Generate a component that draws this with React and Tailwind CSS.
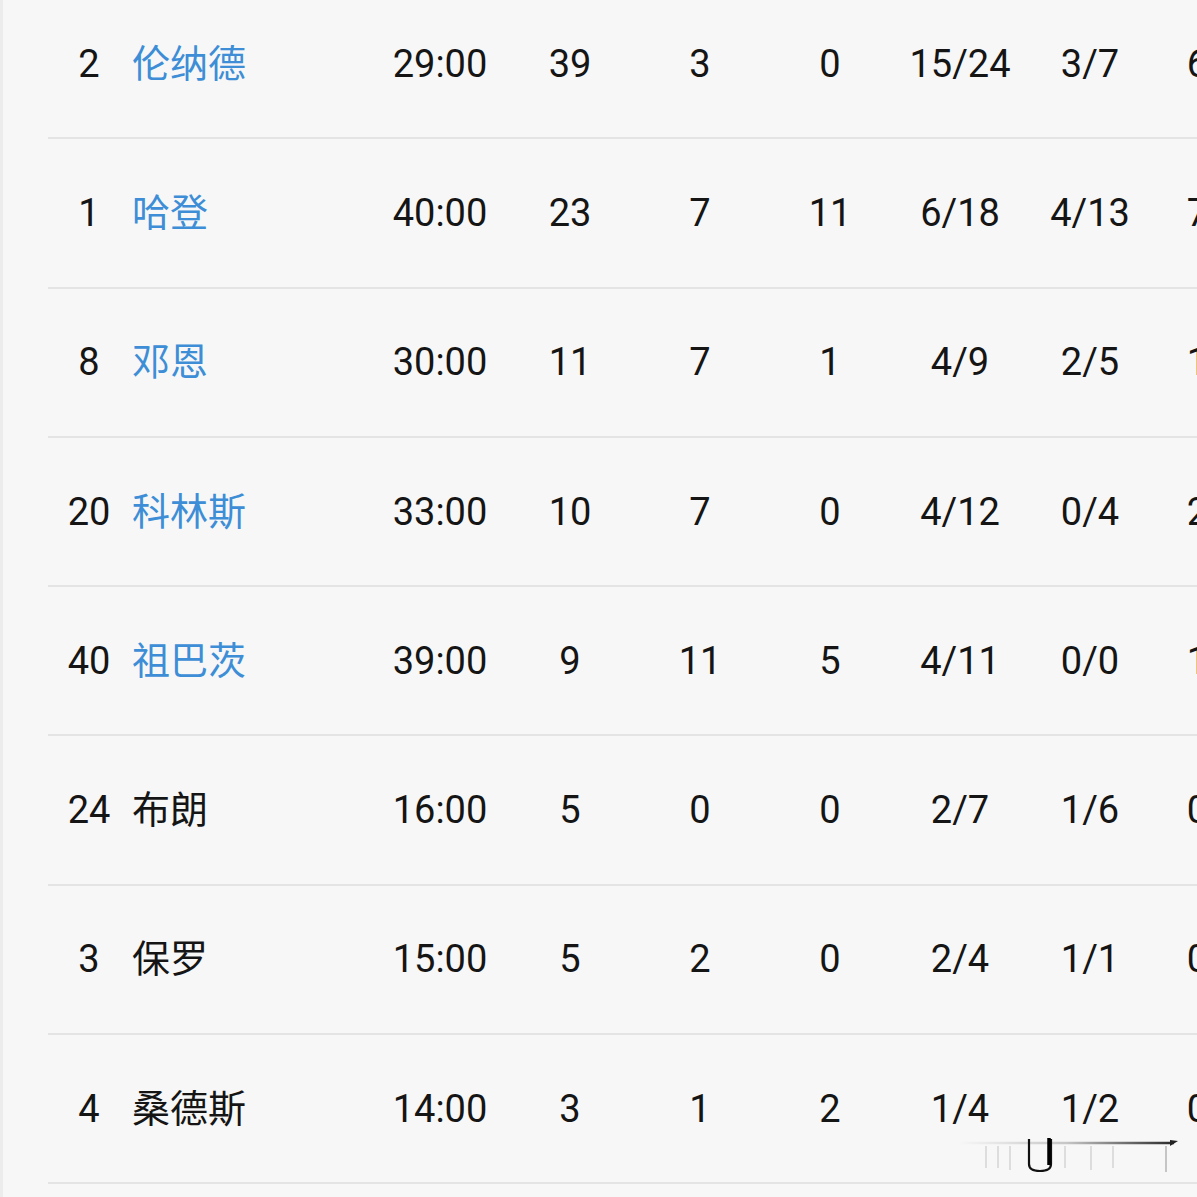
const players = [
  { no: "2", name: "伦纳德", star: true, min: "29:00", pts: "39", reb: "3", ast: "0", fg: "15/24", tp: "3/7", ft: "6/8" },
  { no: "1", name: "哈登", star: true, min: "40:00", pts: "23", reb: "7", ast: "11", fg: "6/18", tp: "4/13", ft: "7/7" },
  { no: "8", name: "邓恩", star: true, min: "30:00", pts: "11", reb: "7", ast: "1", fg: "4/9", tp: "2/5", ft: "1/2" },
  { no: "20", name: "科林斯", star: true, min: "33:00", pts: "10", reb: "7", ast: "0", fg: "4/12", tp: "0/4", ft: "2/2" },
  { no: "40", name: "祖巴茨", star: true, min: "39:00", pts: "9", reb: "11", ast: "5", fg: "4/11", tp: "0/0", ft: "1/2" },
  { no: "24", name: "布朗", star: false, min: "16:00", pts: "5", reb: "0", ast: "0", fg: "2/7", tp: "1/6", ft: "0/0" },
  { no: "3", name: "保罗", star: false, min: "15:00", pts: "5", reb: "2", ast: "0", fg: "2/4", tp: "1/1", ft: "0/0" },
  { no: "4", name: "桑德斯", star: false, min: "14:00", pts: "3", reb: "1", ast: "2", fg: "1/4", tp: "1/2", ft: "0/0" },
];

function Row({ p, first }) {
  return (
    <div
      className={
        "ml-12 flex h-[149.3px] shrink-0 items-center border-b-2 border-[#e4e4e4] " +
        (first ? "-mt-[10px]" : "")
      }
    >
      <div className="w-[82px] shrink-0 text-center">{p.no}</div>
      <div className={"w-[245px] shrink-0 pl-[2px] " + (p.star ? "text-[#3d8ed6]" : "")}>
        {p.name}
      </div>
      <div className="w-[130px] shrink-0 text-center">{p.min}</div>
      <div className="w-[130px] shrink-0 text-center">{p.pts}</div>
      <div className="w-[130px] shrink-0 text-center">{p.reb}</div>
      <div className="w-[130px] shrink-0 text-center">{p.ast}</div>
      <div className="w-[130px] shrink-0 text-center">{p.fg}</div>
      <div className="w-[130px] shrink-0 text-center">{p.tp}</div>
      <div className="w-[122px] shrink-0 text-center">{p.ft}</div>
    </div>
  );
}

// faint watermark stroke at the bottom right
function Mark() {
  return (
    <svg
      className="pointer-events-none absolute left-[945px] top-[1134px]"
      width="235"
      height="45"
      viewBox="0 0 235 45"
    >
      <defs>
        <linearGradient id="ln" gradientUnits="userSpaceOnUse" x1="10" y1="0" x2="228" y2="0">
          <stop offset="0" stopColor="#000" stopOpacity="0" />
          <stop offset="0.5" stopColor="#000" stopOpacity="0.2" />
          <stop offset="1" stopColor="#000" stopOpacity="0.85" />
        </linearGradient>
      </defs>
      <path d="M10 9 L226 9" stroke="url(#ln)" strokeWidth="2.5" />
      <path d="M222 6 L230 7 L222 12 Z" fill="#222" />
      <g stroke="#000" strokeOpacity="0.1" strokeWidth="2">
        <path d="M38 12 V34" />
        <path d="M50 12 V34" />
        <path d="M62 12 V36" />
        <path d="M117 12 V34" />
        <path d="M143 12 V36" />
        <path d="M165 12 V34" />
      </g>
      <path d="M218 12 V38" stroke="#000" strokeOpacity="0.2" strokeWidth="2" />
      <path
        d="M81 5 V30 Q81 37 92 37 Q103 37 103 30 V5"
        fill="none"
        stroke="#111"
        strokeWidth="2.2"
      />
      <path d="M101 4 V31" stroke="#000" strokeWidth="3.5" />
    </svg>
  );
}

export default function App() {
  return (
    <div
      className="relative h-[1197px] w-[1197px] overflow-hidden border-l-[3px] border-[#ececec] bg-[#f7f7f7] text-[38px] leading-none text-[#151515]"
      style={{ fontFamily: 'Roboto, "Noto Sans CJK SC", sans-serif' }}
    >
      <div className="-ml-[3px] flex flex-col">
        {players.map((p, i) => (
          <Row key={p.no} p={p} first={i === 0} />
        ))}
      </div>
      <Mark />
    </div>
  );
}
